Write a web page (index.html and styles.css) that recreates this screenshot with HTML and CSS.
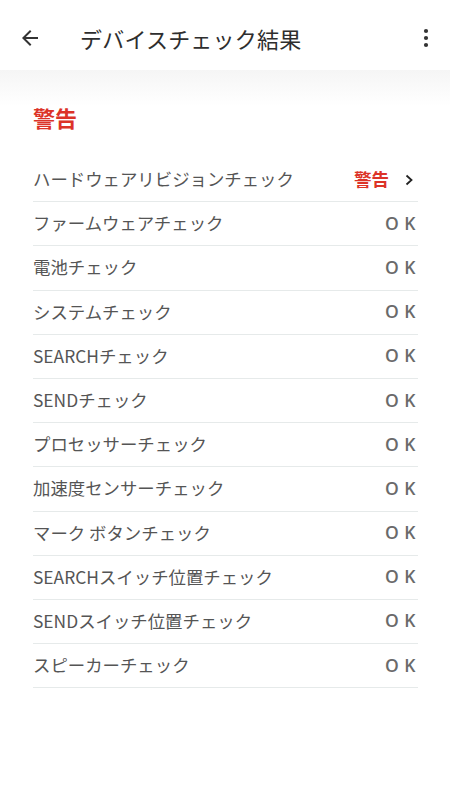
FILE: index.html
```html
<!DOCTYPE html>
<html lang="ja">
<head>
	<meta charset="utf-8">
	<meta name="viewport" content="width=device-width, initial-scale=1.0">
	<link rel="stylesheet" href="styles.css">
</head>
<body>
	<header class="appbar">
		<button class="icon-btn back" aria-label="戻る">
			<svg width="24" height="24" viewBox="0 0 24 24"><path d="M20 11H7.83l5.59-5.59L12 4l-8 8 8 8 1.41-1.41L7.83 13H20v-2z" fill="#333"/></svg>
		</button>
		<h1 class="title">デバイスチェック結果</h1>
		<button class="icon-btn more" aria-label="メニュー">
			<svg width="24" height="24" viewBox="0 0 24 24"><circle cx="12" cy="5" r="2.1" fill="#333"/><circle cx="12" cy="12" r="2.1" fill="#333"/><circle cx="12" cy="19" r="2.1" fill="#333"/></svg>
		</button>
	</header>
	<div class="shade"></div>

	<main class="content">
		<h2 class="section-title">警告</h2>
		<ul class="checks">
			<li class="check">
				<span class="name">ハードウェアリビジョンチェック</span>
				<span class="status warn">警告</span>
				<svg class="chev" width="10" height="12" viewBox="0 0 10 12"><path d="M2.5 1.5l5 4.5-5 4.5" fill="none" stroke="#222" stroke-width="1.8"/></svg>
			</li>
			<li class="check"><span class="name">ファームウェアチェック</span><span class="status ok">OK</span></li>
			<li class="check"><span class="name">電池チェック</span><span class="status ok">OK</span></li>
			<li class="check"><span class="name">システムチェック</span><span class="status ok">OK</span></li>
			<li class="check"><span class="name">SEARCHチェック</span><span class="status ok">OK</span></li>
			<li class="check"><span class="name">SENDチェック</span><span class="status ok">OK</span></li>
			<li class="check"><span class="name">プロセッサーチェック</span><span class="status ok">OK</span></li>
			<li class="check"><span class="name">加速度センサーチェック</span><span class="status ok">OK</span></li>
			<li class="check"><span class="name">マーク ボタンチェック</span><span class="status ok">OK</span></li>
			<li class="check"><span class="name">SEARCHスイッチ位置チェック</span><span class="status ok">OK</span></li>
			<li class="check"><span class="name">SENDスイッチ位置チェック</span><span class="status ok">OK</span></li>
			<li class="check"><span class="name">スピーカーチェック</span><span class="status ok">OK</span></li>
		</ul>
	</main>
</body>
</html>
```

FILE: styles.css
```css
body {
	margin: 0;
	background: #fff;
	font-family: "Noto Sans CJK JP", "Noto Sans", sans-serif;
	color: #555;
}
.appbar {
	display: flex;
	align-items: center;
	height: 70px;
	padding: 6px 12px 0 18px;
	box-sizing: border-box;
}
.icon-btn {
	border: 0;
	background: none;
	padding: 0;
	width: 24px;
	height: 24px;
	display: flex;
}
.title {
	flex: 1;
	margin: 0 0 0 38px;
	font-size: 22px;
	font-weight: 400;
	color: #2e2e2e;
	letter-spacing: 0.2px;
}
.shade {
	height: 36px;
	background: linear-gradient(#f5f5f5, #fff);
}
.content {
	padding: 0 32px 0 33px;
}
.section-title {
	margin: -5px 0 0;
	font-size: 22px;
	font-weight: 700;
	color: #dc3328;
	line-height: 32px;
}
.checks {
	list-style: none;
	margin: 25px 0 0;
	padding: 0;
}
.check {
	display: flex;
	align-items: center;
	height: 43.2px;
	border-bottom: 1px solid #e6eaea;
	font-size: 17.4px;
}
.name {
	flex: 1;
	padding-bottom: 2px;
}
.status {
	font-weight: 700;
	padding-bottom: 2px;
}
.status.ok {
	font-family: "Open Sans", "Noto Sans", sans-serif;
	font-size: 17.5px;
	font-weight: 600;
	letter-spacing: 5.5px;
	margin-right: -3px;
	color: #6a6a6a;
}
.status.warn {
	font-size: 17.5px;
	color: #dc3328;
	margin-right: 15px;
}
.chev {
	margin-right: 4px;
}
```
